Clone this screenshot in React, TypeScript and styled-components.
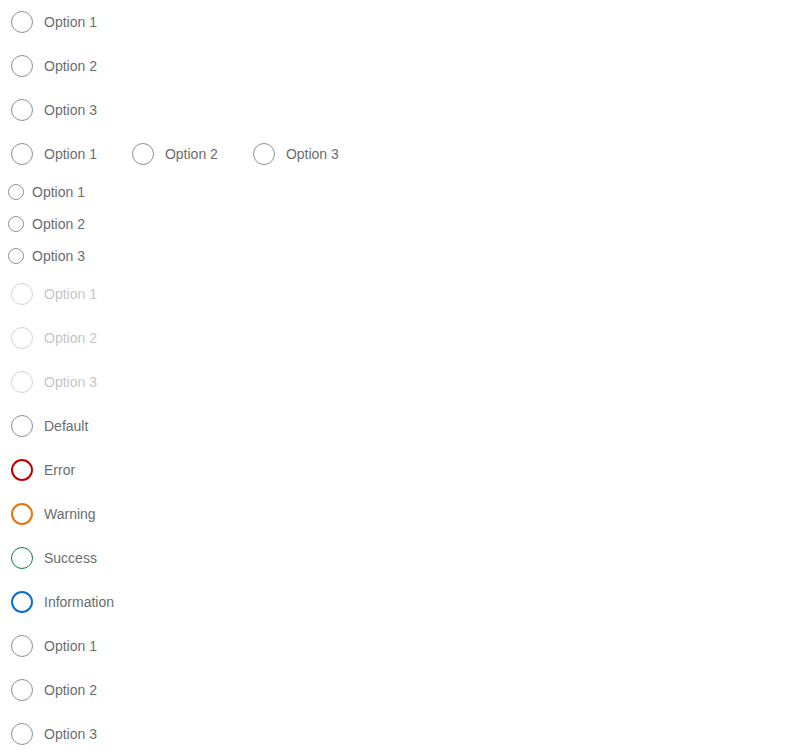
import React from "react";
import styled, { createGlobalStyle } from "styled-components";

const Global = createGlobalStyle`
  html, body { margin: 0; padding: 0; background: #ffffff; }
  body { font-family: "Liberation Sans", Arial, sans-serif; }
`;

type State = "default" | "error" | "warning" | "success" | "information";

const stateColor: Record<State, string> = {
  default: "#89919a",
  error: "#bb0000",
  warning: "#e9730c",
  success: "#107e3e",
  information: "#0a6ed1",
};

const stateWidth: Record<State, number> = {
  default: 1,
  error: 2,
  warning: 2,
  success: 1,
  information: 2,
};

const Page = styled.div`
  display: flex;
  flex-direction: column;
`;

const Group = styled.div<{ $horizontal?: boolean }>`
  display: flex;
  flex-direction: ${(p) => (p.$horizontal ? "row" : "column")};
  align-items: flex-start;
`;

const Item = styled.label<{ $compact?: boolean; $disabled?: boolean; $spaced?: boolean }>`
  display: flex;
  align-items: center;
  height: ${(p) => (p.$compact ? 32 : 44)}px;
  padding-right: ${(p) => (p.$spaced ? 24 : 0)}px;
  opacity: ${(p) => (p.$disabled ? 0.4 : 1)};
  cursor: ${(p) => (p.$disabled ? "default" : "pointer")};
`;

const CircleBox = styled.span<{ $compact?: boolean }>`
  display: flex;
  align-items: center;
  justify-content: center;
  width: ${(p) => (p.$compact ? 32 : 44)}px;
  height: 100%;
`;

const Circle = styled.span<{ $compact?: boolean; $state: State }>`
  box-sizing: border-box;
  width: ${(p) => (p.$compact ? 16 : 22)}px;
  height: ${(p) => (p.$compact ? 16 : 22)}px;
  border-radius: 50%;
  border: ${(p) => stateWidth[p.$state]}px solid ${(p) => stateColor[p.$state]};
  background: #ffffff;
`;

const Text = styled.span`
  font-size: 14px;
  color: #6a6d70;
  white-space: nowrap;
`;

type RadioProps = {
  label: string;
  compact?: boolean;
  disabled?: boolean;
  spaced?: boolean;
  state?: State;
};

const Radio = ({ label, compact, disabled, spaced, state = "default" }: RadioProps) => (
  <Item $compact={compact} $disabled={disabled} $spaced={spaced}>
    <CircleBox $compact={compact}>
      <Circle $compact={compact} $state={state} />
    </CircleBox>
    <Text>{label}</Text>
  </Item>
);

const opts = ["Option 1", "Option 2", "Option 3"];

export default function App() {
  return (
    <Page>
      <Global />
      <Group>
        {opts.map((o) => (
          <Radio key={o} label={o} />
        ))}
      </Group>
      <Group $horizontal>
        {opts.map((o) => (
          <Radio key={o} label={o} spaced />
        ))}
      </Group>
      <Group>
        {opts.map((o) => (
          <Radio key={o} label={o} compact />
        ))}
      </Group>
      <Group>
        {opts.map((o) => (
          <Radio key={o} label={o} disabled />
        ))}
      </Group>
      <Group>
        <Radio label="Default" state="default" />
        <Radio label="Error" state="error" />
        <Radio label="Warning" state="warning" />
        <Radio label="Success" state="success" />
        <Radio label="Information" state="information" />
      </Group>
      <Group>
        {opts.map((o) => (
          <Radio key={o} label={o} />
        ))}
      </Group>
    </Page>
  );
}
